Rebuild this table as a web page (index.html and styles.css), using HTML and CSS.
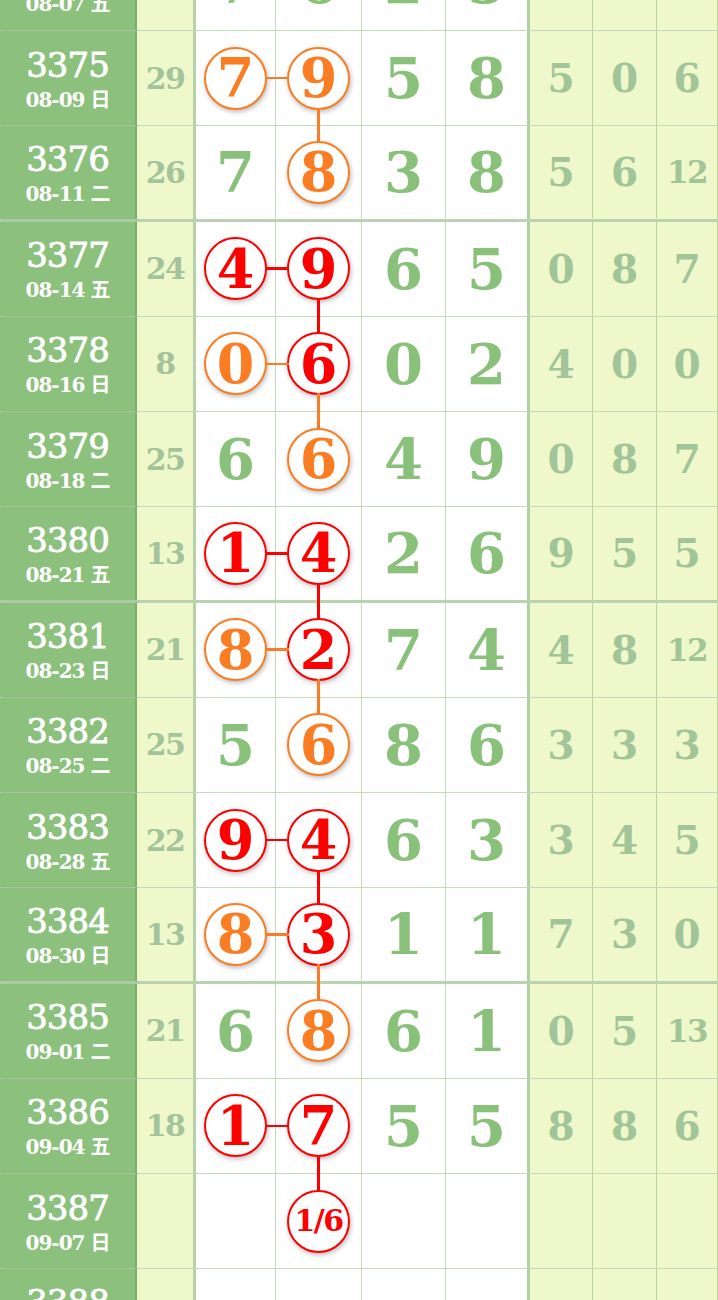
FILE: index.html
```html
<!DOCTYPE html>
<html lang="zh-CN">
<head>
    <meta charset="UTF-8">
    <meta name="viewport" content="width=device-width, initial-scale=1.0">
    <title>走势图</title>
    <link rel="stylesheet" href="styles.css">
</head>
<body>
    <div class="chart">
        <div class="row">
            <div class="issue"><b>3374</b><span>08-07 五</span></div>
            <div class="sum">17</div>
            <div class="num">7</div>
            <div class="num">6</div>
            <div class="num">2</div>
            <div class="num sep">5</div>
            <div class="dist">2</div>
            <div class="dist">4</div>
            <div class="dist">9</div>
        </div>
        <div class="row">
            <div class="issue"><b>3375</b><span>08-09 日</span></div>
            <div class="sum">29</div>
            <div class="num"><span class="ball orange">7</span></div>
            <div class="num"><span class="ball orange link-left link-down">9</span></div>
            <div class="num">5</div>
            <div class="num sep">8</div>
            <div class="dist">5</div>
            <div class="dist">0</div>
            <div class="dist">6</div>
        </div>
        <div class="row group-end">
            <div class="issue"><b>3376</b><span>08-11 二</span></div>
            <div class="sum">26</div>
            <div class="num">7</div>
            <div class="num"><span class="ball orange">8</span></div>
            <div class="num">3</div>
            <div class="num sep">8</div>
            <div class="dist">5</div>
            <div class="dist">6</div>
            <div class="dist wide">12</div>
        </div>
        <div class="row">
            <div class="issue"><b>3377</b><span>08-14 五</span></div>
            <div class="sum">24</div>
            <div class="num"><span class="ball red">4</span></div>
            <div class="num"><span class="ball red link-left link-down">9</span></div>
            <div class="num">6</div>
            <div class="num sep">5</div>
            <div class="dist">0</div>
            <div class="dist">8</div>
            <div class="dist">7</div>
        </div>
        <div class="row">
            <div class="issue"><b>3378</b><span>08-16 日</span></div>
            <div class="sum">8</div>
            <div class="num"><span class="ball orange">0</span></div>
            <div class="num"><span class="ball red link-left-orange link-down-orange">6</span></div>
            <div class="num">0</div>
            <div class="num sep">2</div>
            <div class="dist">4</div>
            <div class="dist">0</div>
            <div class="dist">0</div>
        </div>
        <div class="row">
            <div class="issue"><b>3379</b><span>08-18 二</span></div>
            <div class="sum">25</div>
            <div class="num">6</div>
            <div class="num"><span class="ball orange">6</span></div>
            <div class="num">4</div>
            <div class="num sep">9</div>
            <div class="dist">0</div>
            <div class="dist">8</div>
            <div class="dist">7</div>
        </div>
        <div class="row group-end">
            <div class="issue"><b>3380</b><span>08-21 五</span></div>
            <div class="sum">13</div>
            <div class="num"><span class="ball red">1</span></div>
            <div class="num"><span class="ball red link-left link-down">4</span></div>
            <div class="num">2</div>
            <div class="num sep">6</div>
            <div class="dist">9</div>
            <div class="dist">5</div>
            <div class="dist">5</div>
        </div>
        <div class="row">
            <div class="issue"><b>3381</b><span>08-23 日</span></div>
            <div class="sum">21</div>
            <div class="num"><span class="ball orange">8</span></div>
            <div class="num"><span class="ball red link-left-orange link-down-orange">2</span></div>
            <div class="num">7</div>
            <div class="num sep">4</div>
            <div class="dist">4</div>
            <div class="dist">8</div>
            <div class="dist wide">12</div>
        </div>
        <div class="row">
            <div class="issue"><b>3382</b><span>08-25 二</span></div>
            <div class="sum">25</div>
            <div class="num">5</div>
            <div class="num"><span class="ball orange">6</span></div>
            <div class="num">8</div>
            <div class="num sep">6</div>
            <div class="dist">3</div>
            <div class="dist">3</div>
            <div class="dist">3</div>
        </div>
        <div class="row">
            <div class="issue"><b>3383</b><span>08-28 五</span></div>
            <div class="sum">22</div>
            <div class="num"><span class="ball red">9</span></div>
            <div class="num"><span class="ball red link-left link-down">4</span></div>
            <div class="num">6</div>
            <div class="num sep">3</div>
            <div class="dist">3</div>
            <div class="dist">4</div>
            <div class="dist">5</div>
        </div>
        <div class="row group-end">
            <div class="issue"><b>3384</b><span>08-30 日</span></div>
            <div class="sum">13</div>
            <div class="num"><span class="ball orange">8</span></div>
            <div class="num"><span class="ball red link-left-orange link-down-orange">3</span></div>
            <div class="num">1</div>
            <div class="num sep">1</div>
            <div class="dist">7</div>
            <div class="dist">3</div>
            <div class="dist">0</div>
        </div>
        <div class="row">
            <div class="issue"><b>3385</b><span>09-01 二</span></div>
            <div class="sum">21</div>
            <div class="num">6</div>
            <div class="num"><span class="ball orange">8</span></div>
            <div class="num">6</div>
            <div class="num sep">1</div>
            <div class="dist">0</div>
            <div class="dist">5</div>
            <div class="dist wide">13</div>
        </div>
        <div class="row">
            <div class="issue"><b>3386</b><span>09-04 五</span></div>
            <div class="sum">18</div>
            <div class="num"><span class="ball red">1</span></div>
            <div class="num"><span class="ball red link-left link-down">7</span></div>
            <div class="num">5</div>
            <div class="num sep">5</div>
            <div class="dist">8</div>
            <div class="dist">8</div>
            <div class="dist">6</div>
        </div>
        <div class="row">
            <div class="issue"><b>3387</b><span>09-07 日</span></div>
            <div class="sum"></div>
            <div class="num"></div>
            <div class="num"><span class="ball red small">1/6</span></div>
            <div class="num"></div>
            <div class="num sep"></div>
            <div class="dist"></div>
            <div class="dist"></div>
            <div class="dist"></div>
        </div>
        <div class="row group-end">
            <div class="issue"><b>3388</b><span>09-09 二</span></div>
            <div class="sum"></div>
            <div class="num"></div>
            <div class="num"></div>
            <div class="num"></div>
            <div class="num sep"></div>
            <div class="dist"></div>
            <div class="dist"></div>
            <div class="dist"></div>
        </div>
    </div>
</body>
</html>
```

FILE: styles.css
```css
body {
    margin: 0;
    padding: 0;
    background-color: #fff;
    font-family: "DejaVu Serif", "Noto Sans CJK SC", serif;
    overflow: hidden;
}
.chart {
    width: 718px;
    margin-top: -64.25px;
}
.row {
    display: grid;
    grid-template-columns: 137px 59px 80px 86px 84px 84px 63px 64px 61px;
    height: 95.25px;
    box-sizing: border-box;
    border-bottom: 1px solid rgba(100, 155, 80, 0.38);
}
.row.group-end {
    border-bottom: 3px solid rgba(100, 155, 80, 0.45);
}
.row > div {
    display: flex;
    align-items: center;
    justify-content: center;
    box-sizing: border-box;
    border-right: 1px solid rgba(100, 155, 80, 0.38);
}
.issue {
    flex-direction: column;
    background-color: #8cc07d;
    color: #fff;
    border-right: 2px solid #79ad6a !important;
    box-shadow: 1px 0 2px rgba(60, 110, 50, 0.35);
    padding-top: 5px;
}
.issue b {
    font-weight: 500;
    font-size: 34px;
    line-height: 38px;
    letter-spacing: -1px;
    -webkit-text-stroke: 0.8px #fff;
}
.issue span {
    font-weight: bold;
    font-size: 20px;
    line-height: 32px;
    letter-spacing: -1px;
}
.sum {
    background-color: #eff8ca;
    color: #a3c49b;
    font-weight: bold;
    font-size: 30px;
    letter-spacing: -1.5px;
    border-right: 3px solid #b6d1a9 !important;
}
.num {
    color: #89c07a;
    font-weight: bold;
    font-size: 56px;
}
.num.sep {
    border-right: 3px solid #b2cea4 !important;
}
.dist {
    background-color: #eff8ca;
    color: #a1c499;
    font-weight: bold;
    font-size: 39px;
}
.dist.wide {
    font-size: 31px;
    letter-spacing: -1.5px;
}
.ball {
    position: relative;
    width: 63px;
    height: 63px;
    box-sizing: border-box;
    border-radius: 50%;
    border: 2.5px solid;
    background-color: #fff;
    display: flex;
    align-items: center;
    justify-content: center;
    font-size: 54px;
    line-height: 1;
    box-shadow: 1px 2px 5px rgba(0, 0, 0, 0.28);
    z-index: 2;
}
.ball.orange {
    color: #fb7d23;
    border-color: #fb7d23;
}
.ball.red {
    color: #f00;
    border-color: #f00;
}
.ball.small {
    font-size: 30px;
    letter-spacing: -1.5px;
}
.link-left::before,
.link-left-orange::before {
    content: "";
    position: absolute;
    right: 100%;
    top: 50%;
    width: 23px;
    height: 2.5px;
    margin-top: -1.25px;
    background-color: #f00;
}
.link-left-orange::before {
    background-color: #fb7d23;
}
.link-down::after,
.link-down-orange::after {
    content: "";
    position: absolute;
    top: 100%;
    left: 50%;
    width: 2.5px;
    height: 36px;
    margin-left: -1.25px;
    background-color: #f00;
}
.link-down-orange::after {
    background-color: #fb7d23;
}
.ball.orange.link-left::before,
.ball.orange.link-down::after {
    background-color: #fb7d23;
}
```
